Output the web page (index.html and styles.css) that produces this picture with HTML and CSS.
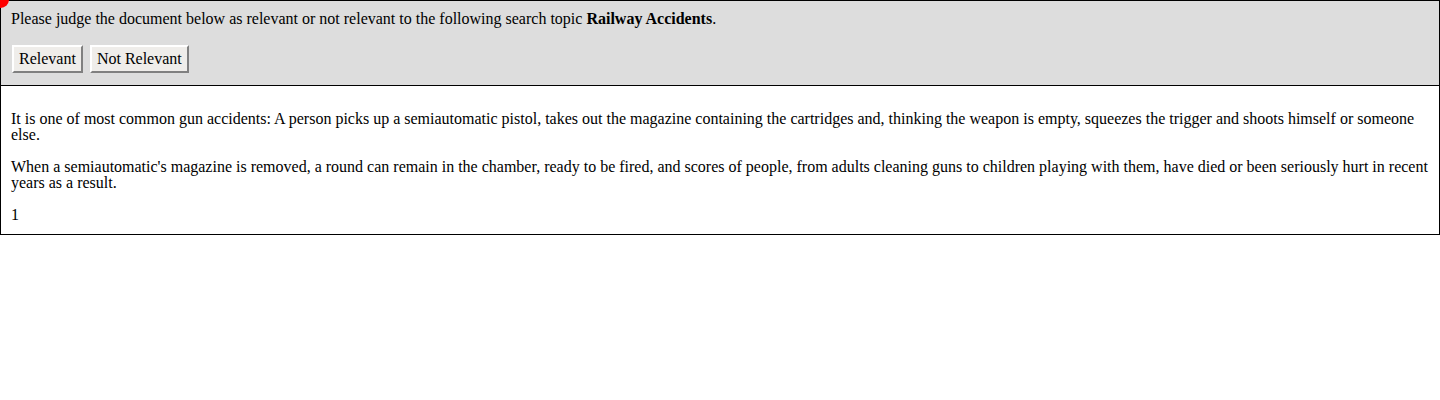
FILE: index.html
```html
<!DOCTYPE html>
<html>
<head>
<meta charset="utf-8">
<link rel="stylesheet" href="styles.css">
</head>
<body>
<div class="dot"></div>
<div class="panel">
  <div class="prompt">Please judge the document below as relevant or not relevant to the following search topic <b>Railway Accidents</b>.</div>
  <div class="actions">
    <button class="btn">Relevant</button>
    <button class="btn">Not Relevant</button>
  </div>
</div>
<div class="doc">
  <p>It is one of most common gun accidents: A person picks up a semiautomatic pistol, takes out the magazine containing the cartridges and, thinking the weapon is empty, squeezes the trigger and shoots himself or someone else.</p>
  <p>When a semiautomatic's magazine is removed, a round can remain in the chamber, ready to be fired, and scores of people, from adults cleaning guns to children playing with them, have died or been seriously hurt in recent years as a result.</p>
  <p class="num">1</p>
</div>
</body>
</html>
```
FILE: styles.css
```css
html, body {
  margin: 0;
  padding: 0;
  background: #fff;
}
body {
  font-family: "Liberation Serif", "Times New Roman", serif;
  font-size: 16px;
  line-height: 16px;
  color: #000;
  position: relative;
}
.dot {
  position: absolute;
  left: -8px;
  top: -9px;
  width: 17px;
  height: 17px;
  border-radius: 50%;
  background: #f00;
  z-index: 2;
}
.panel {
  background: #dddddd;
  border: 1px solid #000;
  padding: 10px 10px 12px 10px;
}
.prompt {
  line-height: 16px;
}
.actions {
  display: flex;
  gap: 7px;
  margin-top: 18px;
  padding-left: 1px;
}
.btn {
  font-family: "Liberation Serif", "Times New Roman", serif;
  font-size: 16px;
  line-height: 18px;
  background: #efedea;
  color: #000;
  border: 2px solid;
  border-color: #fff #808080 #808080 #fff;
  padding: 3px 5px 5px 5px;
  height: 28px;
  margin: 0;
}
.doc {
  border: 1px solid #000;
  border-top: none;
  padding: 9px 10px 11px 10px;
}
.doc p {
  margin: 16px 0;
}
.doc p.num {
  margin-bottom: 0;
}
```
